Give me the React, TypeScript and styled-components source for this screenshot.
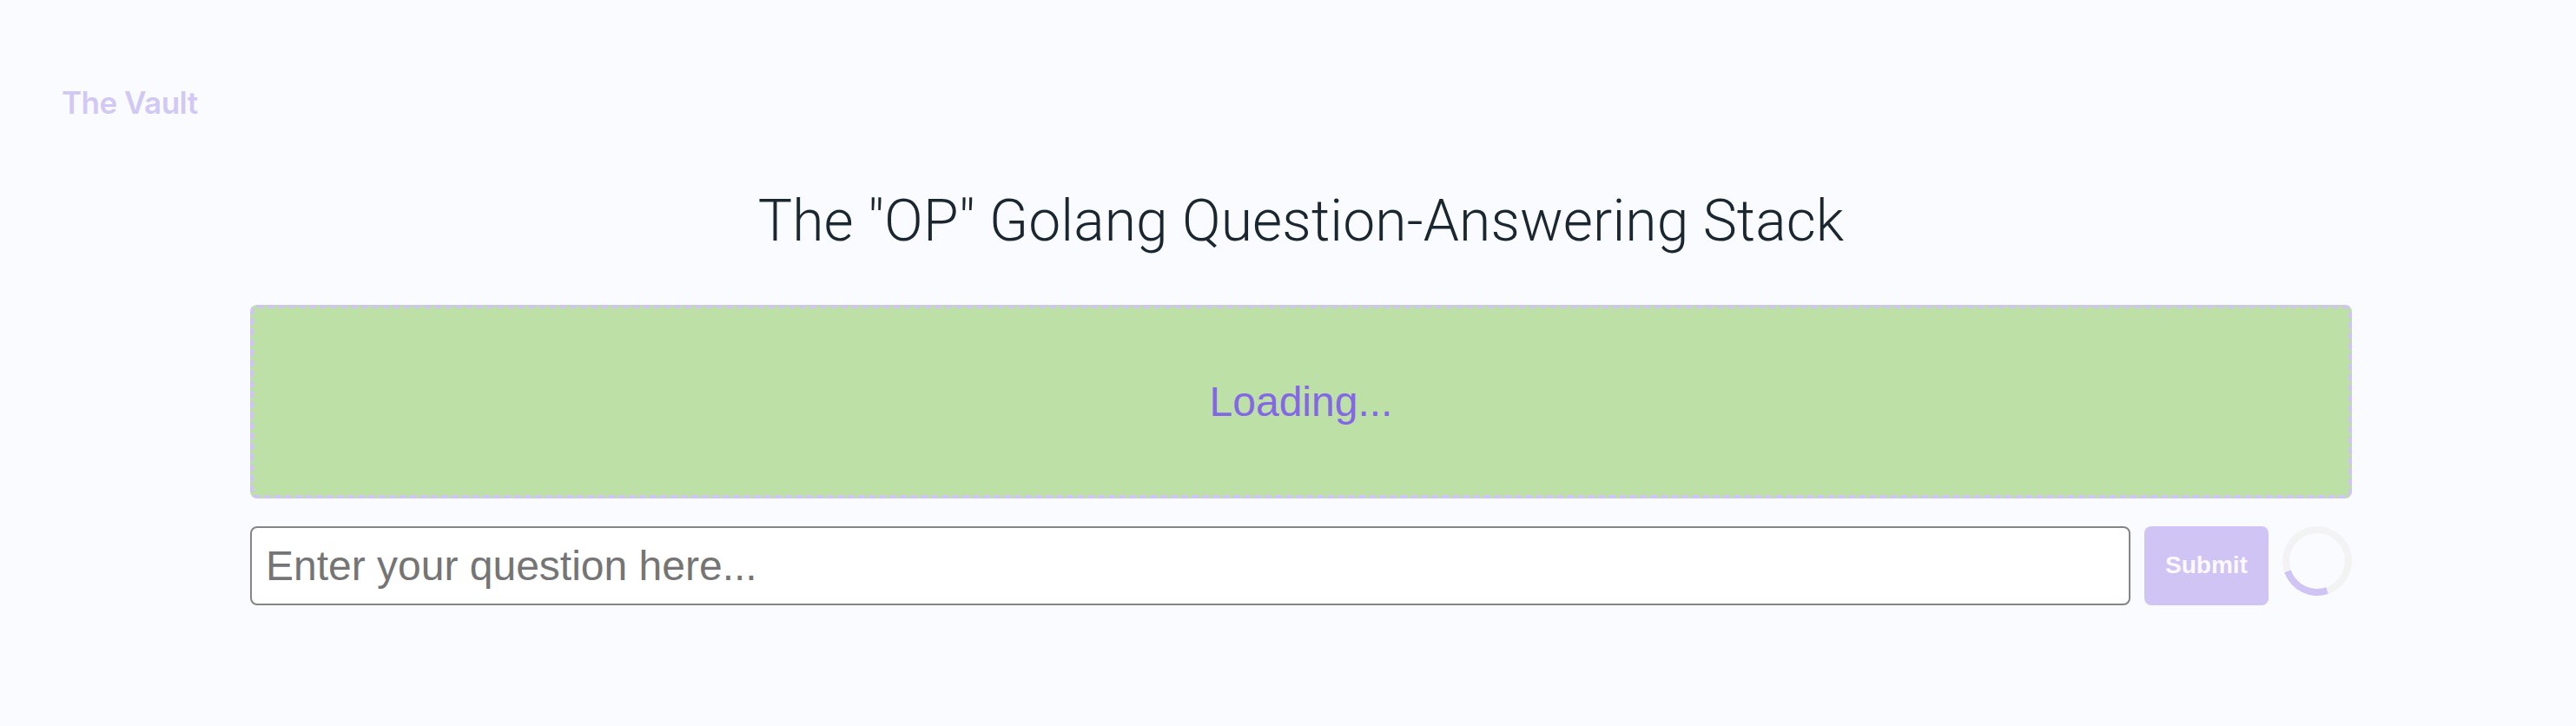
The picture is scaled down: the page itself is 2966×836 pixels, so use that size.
import styled, { createGlobalStyle } from "styled-components";

const GlobalStyle = createGlobalStyle`
  html, body {
    margin: 0;
    padding: 0;
    background: #fafbff;
    font-family: "Liberation Sans", Arial, sans-serif;
  }
`;

const Page = styled.div`
  width: 2966px;
  height: 836px;
  box-sizing: border-box;
  overflow: hidden;
  background: #fafbff;
`;

const Header = styled.header`
  height: 218px;
  padding: 96px 0 0 71px;
  box-sizing: border-box;
`;

const Logo = styled.div`
  font-family: Inter, sans-serif;
  font-size: 35px;
  font-weight: 600;
  line-height: 44px;
  letter-spacing: -0.5px;
  color: #d1c8f6;
`;

const Main = styled.main`
  padding: 0 258px 0 288px;
  display: flex;
  flex-direction: column;
`;

const Title = styled.h1`
  margin: 0 0 59px;
  font-family: Roboto, sans-serif;
  font-size: 66px;
  font-weight: 300;
  line-height: 74px;
  letter-spacing: 0.1px;
  text-align: center;
  color: #1a2730;
`;

const ResultBox = styled.div`
  height: 223px;
  box-sizing: border-box;
  display: flex;
  align-items: center;
  justify-content: center;
  background: #bde0a6;
  border: 4px dashed #cfc4f4;
  border-radius: 8px;
  font-size: 48px;
  color: #8467e8;
`;

const QuestionForm = styled.form`
  margin-top: 32px;
  display: flex;
  align-items: flex-start;
  gap: 16px;
`;

const QuestionInput = styled.input`
  flex: 1;
  height: 91px;
  box-sizing: border-box;
  padding: 0 16px;
  background: #fff;
  border: 2px solid #858585;
  border-radius: 8px;
  font-family: "Liberation Sans", Arial, sans-serif;
  font-size: 48px;
  outline: none;
  &::placeholder {
    color: #757575;
    opacity: 1;
  }
`;

const SubmitButton = styled.button`
  width: 143px;
  height: 91px;
  padding: 0 0 2px;
  background: #cfc4f4;
  border: 0;
  border-radius: 8px;
  font-family: "Liberation Sans", Arial, sans-serif;
  font-size: 28px;
  font-weight: 700;
  color: #fbf9ff;
`;

const Spinner = styled.div`
  width: 80px;
  height: 80px;
  box-sizing: border-box;
  border: 8px solid #f3f3f3;
  border-bottom-color: #cfc4f4;
  border-radius: 50%;
  transform: rotate(26deg);
`;

export default function App() {
  return (
    <Page>
      <GlobalStyle />
      <Header>
        <Logo>The Vault</Logo>
      </Header>
      <Main>
        <Title>The "OP" Golang Question-Answering Stack</Title>
        <ResultBox>Loading...</ResultBox>
        <QuestionForm onSubmit={(e) => e.preventDefault()}>
          <QuestionInput type="text" placeholder="Enter your question here..." />
          <SubmitButton type="submit">Submit</SubmitButton>
          <Spinner />
        </QuestionForm>
      </Main>
    </Page>
  );
}
